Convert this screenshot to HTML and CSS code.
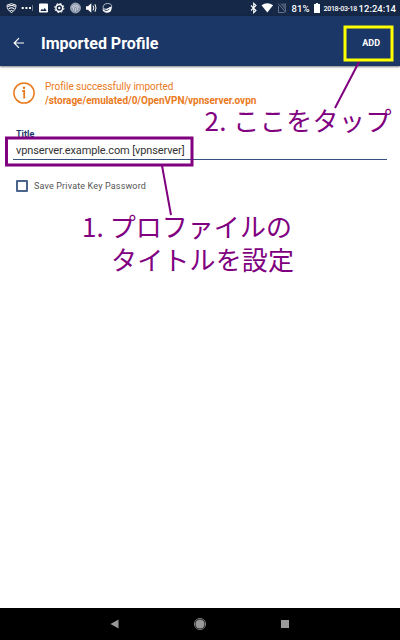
FILE: index.html
```
<!DOCTYPE html>
<html lang="ja">
<head>
<meta charset="utf-8">
<title>Imported Profile</title>
<link rel="stylesheet" href="styles.css">
</head>
<body>
<div class="screen">
  <div class="status">
    <svg class="status-icons" width="116" height="16" viewBox="0 0 116 16" fill="none" stroke="#fff">
      <path d="M7 5.2Q11.500 2.200 16 5.200Q16 10 11.500 12.500Q7 10 7 5.200Z" stroke-width="1"/>
      <path d="M8 6.500Q11.500 4.500 15 6.500M9 8.700Q11.500 6.700 14 8.700M10.500 10.600Q11.500 9.800 12.500 10.600" stroke-width="1.100"/>
      <path d="M21.700 8h2M25.400 8h2M29 8h2" stroke-width="2"/>
      <path d="M32.500 5v6" stroke="#7d8ba3" stroke-width=".8"/>
      <path d="M40 3.500h7q1 0 1 1v7q0 1-1 1h-7q-1 0-1-1v-7q0-1 1-1ZM40.300 11h6.500l-2.100-3-1.600 2-1.100-1.300Z" fill="#fff" fill-rule="evenodd" stroke="none"/>
      <circle cx="59.300" cy="8" r="3.400" stroke-width="1.500"/>
      <circle cx="59.300" cy="8" r="1.200" fill="#fff" stroke="none"/>
      <circle cx="59.300" cy="8" r="4.600" stroke-width="1" stroke-dasharray="1.800 1.813"/>
      <circle cx="75.500" cy="8" r="5" fill="#8d98ad" stroke="#b5bdcb" stroke-width=".7"/>
      <path d="M72 8q0-3 3.500-3t3.500 3M73.500 10.500V8q0-1.500 2-1.500t2 1.500v2M75.500 8v3.500" stroke="#d8dde6" stroke-width=".7"/>
      <path d="M86 6.200h2l3.300-3v9.600l-3.300-3h-2Z" fill="#fff" stroke="none"/>
      <path d="M93 5.500q1.700 2.500 0 5M95 4.200q2 3.800 0 7.600" stroke-width="1"/>
      <path d="M103 8.500q0-5 4.500-5t4.200 3.500q-1.700 0-3.200 1.500t-5.500 0Z" stroke="#c5ccd8" stroke-width=".9"/>
      <path d="M102.500 9q3 1.500 5-.5t4.200-1.500q.3 5.500-4.200 5.800t-5-3.800Z" fill="#fff" stroke="none"/>
      <path d="M104.500 10.800q3 .2 5-1.800" stroke="#152848" stroke-width=".8"/>
    </svg>
    <div class="status-right">
      <svg width="44" height="16" viewBox="246 0 44 16" fill="none">
        <path d="M251 5.500l5 5-2.300 2.200V3.300l2.300 2.200-5 5" stroke="#fff" stroke-width="1.100"/>
        <path d="M261.500 5.300q5.800-4.200 11.600 0l-5.800 7.300Z" fill="#fff"/>
        <path d="M285.500 3.500v8M278.500 6v6.500h6M278 3.500l8 9" stroke="#66738c" stroke-width="1"/>
        <path d="M280 3.500h5.500v7Z" fill="#46546f"/>
      </svg>
      <span class="battery-text">81%</span>
      <svg class="battery" width="6" height="10" viewBox="0 0 6 10"><path d="M0 1h2V0h2v1h2v9H0Z" fill="#fff"/></svg>
      <span class="date">2018-03-18</span>
      <span class="clock">12:24:14</span>
    </div>
  </div>
  <header class="toolbar">
    <svg class="back" width="12" height="12" viewBox="0 0 12 12" fill="none" stroke="#fff" stroke-width="1.200"><path d="M11 6H1.300M6 1.200L1.200 6 6 10.800"/></svg>
    <h1>Imported Profile</h1>
    <span class="add">ADD</span>
  </header>
  <main>
    <div class="notice">
      <svg width="22" height="22" viewBox="0 0 22 22"><circle cx="11" cy="11" r="10.100" fill="none" stroke="#ea7a1c" stroke-width="1.500"/><path d="M9.300 9h1.900v7.500" fill="none" stroke="#ea7a1c" stroke-width="1.800"/><circle cx="11" cy="5.700" r="1.300" fill="#ea7a1c"/></svg>
      <div><p class="message">Profile successfully imported</p><p class="path">/storage/emulated/0/OpenVPN/vpnserver.ovpn</p></div>
    </div>
    <div class="label">Title</div>
    <div class="field"><span>vpnserver.example.com [vpnserver]</span></div>
    <div class="option"><i class="box"></i><span>Save Private Key Password</span></div>
  </main>
  <footer>
    <svg width="400" height="32" viewBox="0 0 400 32" fill="#999"><path d="M110.500 16l8-4.500v9Z"/><circle cx="200" cy="16" r="4.600"/><circle cx="200" cy="16" r="5.600" fill="none" stroke="#999" stroke-width=".8"/><path d="M281 12h8v8h-8Z"/></svg>
  </footer>
  <svg class="notes" width="400" height="640" viewBox="0 0 400 640">
    <g fill="none" stroke="#800080">
      <rect x="6.500" y="138" width="185.500" height="27" stroke-width="3"/>
      <path d="M162 165.500L171 215M360 60L335 108" stroke-width="2"/>
    </g>
    <rect x="345" y="27" width="47" height="33" fill="none" stroke="#ff0" stroke-width="3"/>
    <g class="note-text">
      <text x="204.500" y="131" textLength="187">2. ここをタップ</text>
      <text x="82" y="237" textLength="210">1. プロファイルの</text>
      <text x="111" y="270" textLength="183">タイトルを設定</text>
    </g>
  </svg>
</div>
</body>
</html>
```
FILE: styles.css
```
* { box-sizing: border-box; }
body { margin: 0; font-family: Roboto, "Noto Sans CJK JP", sans-serif; }
p, h1 { margin: 0; }
.screen { position: relative; width: 400px; height: 640px; display: flex; flex-direction: column; overflow: hidden; background: #fff; }
.status { height: 16px; flex: none; display: flex; justify-content: space-between; background: #152848; color: #fff; }
.status-right { display: flex; align-items: center; padding-right: 4px; white-space: nowrap; }
.battery-text { font-size: 9.500px; font-weight: 500; width: 18px; margin-left: 2px; }
.battery { margin: 0 4px; }
.date { font-size: 7px; font-weight: 500; width: 35px; letter-spacing: -.33px; padding-top: 2px; }
.clock { font-size: 9.500px; font-weight: 500; }
.toolbar { height: 50px; flex: none; display: flex; align-items: center; padding: 5px 20px 0 13px; background: #1b3767; color: #fff; box-shadow: 0 1px 2px rgba(0,0,0,.5); position: relative; }
.back { margin-top: -2px; }
h1 { font-size: 16px; line-height: 20px; font-weight: 700; margin-left: 16px; padding-top: 1px; }
.add { margin-left: auto; margin-top: -1px; font-size: 9px; font-weight: 700; }
main { flex: 1; padding: 14px 13px 0; }
.notice { display: flex; gap: 10px; color: #ea7a1c; font-size: 10px; line-height: 14px; }
.notice svg { margin-top: 2px; flex: none; }
.message { letter-spacing: -.04px; }
.path { font-weight: 700; letter-spacing: -.03px; }
.label { margin: 19px 0 0 3px; font-size: 9px; line-height: 14px; height: 12px; font-weight: 700; color: #1b3767; }
.field { height: 21px; border-bottom: 1px solid #34517f; padding-left: 3px; font-size: 11px; line-height: 23px; letter-spacing: -.12px; color: #333; white-space: nowrap; }
.option { display: flex; align-items: center; gap: 6px; margin: 19px 0 0 3px; font-size: 9px; line-height: 14px; letter-spacing: .16px; color: #555; }
.box { width: 12px; height: 12px; margin-top: -1px; border: 2px solid #4a648d; border-radius: 1px; }
footer { height: 32px; flex: none; background: #000; }
footer svg { display: block; }
.notes { position: absolute; inset: 0; pointer-events: none; }
.note-text { font-family: "Noto Sans CJK JP", sans-serif; font-size: 26px; fill: #800080; }
```
